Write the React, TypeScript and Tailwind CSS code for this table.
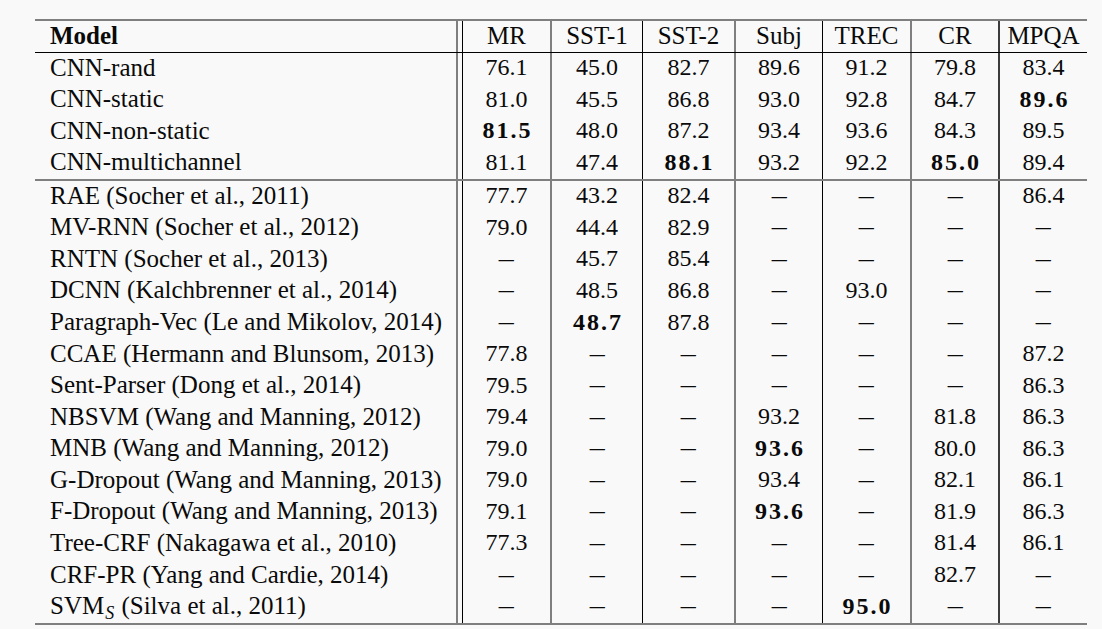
import React from "react";

type Cell = string | { b: string };
type Row = { name: React.ReactNode; v: Cell[] };

const cols = [
  "w-[88px] border-l border-black",
  "w-[92px] border-l-2 border-[#7f7f7f]",
  "w-[92px] border-l border-black",
  "w-[88px] border-l-2 border-[#7f7f7f]",
  "w-[88px] border-l border-black",
  "w-[88px] border-l-2 border-[#7f7f7f]",
  "w-[89px] border-l-2 border-[#3c3c3c]",
];

const D = "–";

const group1: Row[] = [
  { name: "CNN-rand", v: ["76.1", "45.0", "82.7", "89.6", "91.2", "79.8", "83.4"] },
  { name: "CNN-static", v: ["81.0", "45.5", "86.8", "93.0", "92.8", "84.7", { b: "89.6" }] },
  { name: "CNN-non-static", v: [{ b: "81.5" }, "48.0", "87.2", "93.4", "93.6", "84.3", "89.5"] },
  { name: "CNN-multichannel", v: ["81.1", "47.4", { b: "88.1" }, "93.2", "92.2", { b: "85.0" }, "89.4"] },
];

const group2: Row[] = [
  { name: "RAE (Socher et al., 2011)", v: ["77.7", "43.2", "82.4", D, D, D, "86.4"] },
  { name: "MV-RNN (Socher et al., 2012)", v: ["79.0", "44.4", "82.9", D, D, D, D] },
  { name: "RNTN (Socher et al., 2013)", v: [D, "45.7", "85.4", D, D, D, D] },
  { name: "DCNN (Kalchbrenner et al., 2014)", v: [D, "48.5", "86.8", D, "93.0", D, D] },
  { name: "Paragraph-Vec (Le and Mikolov, 2014)", v: [D, { b: "48.7" }, "87.8", D, D, D, D] },
  { name: "CCAE (Hermann and Blunsom, 2013)", v: ["77.8", D, D, D, D, D, "87.2"] },
  { name: "Sent-Parser (Dong et al., 2014)", v: ["79.5", D, D, D, D, D, "86.3"] },
  { name: "NBSVM (Wang and Manning, 2012)", v: ["79.4", D, D, "93.2", D, "81.8", "86.3"] },
  { name: "MNB (Wang and Manning, 2012)", v: ["79.0", D, D, { b: "93.6" }, D, "80.0", "86.3"] },
  { name: "G-Dropout (Wang and Manning, 2013)", v: ["79.0", D, D, "93.4", D, "82.1", "86.1"] },
  { name: "F-Dropout (Wang and Manning, 2013)", v: ["79.1", D, D, { b: "93.6" }, D, "81.9", "86.3"] },
  { name: "Tree-CRF (Nakagawa et al., 2010)", v: ["77.3", D, D, D, D, "81.4", "86.1"] },
  { name: "CRF-PR (Yang and Cardie, 2014)", v: [D, D, D, D, D, "82.7", D] },
  {
    name: (
      <span>
        SVM
        <span className="italic text-[18px] relative top-[5px] ml-[1px] mr-[1px]">S</span> (Silva et al., 2011)
      </span>
    ),
    v: [D, D, D, D, { b: "95.0" }, D, D],
  },
];

function ValueCell({ c, cls }: { c: Cell; cls: string }) {
  if (typeof c === "string") {
    if (c === D) {
      return (
        <div className={`${cls} flex items-center justify-center pb-[3px]`}>
          <span className="text-[25px] inline-block scale-x-[1.2]">{c}</span>
        </div>
      );
    }
    return (
      <div className={`${cls} flex items-center justify-center pb-[3px]`}>
        <span className="text-[24px]">{c}</span>
      </div>
    );
  }
  return (
    <div className={`${cls} flex items-center justify-center pb-[3px]`}>
      <span className="text-[24px] font-bold tracking-[2px] pl-[2px]">{c.b}</span>
    </div>
  );
}

function BodyRow({ r, h }: { r: Row; h: string }) {
  return (
    <div className={`flex ${h}`}>
      <div className="w-[423px] border-r-2 border-[#7f7f7f] pl-[15px] flex items-center pb-[3px] text-[25px] whitespace-nowrap">
        {r.name}
      </div>
      <div className="w-[4px]" />
      {r.v.map((c, i) => (
        <ValueCell key={i} c={c} cls={cols[i]} />
      ))}
    </div>
  );
}

export default function App() {
  const heads = ["MR", "SST-1", "SST-2", "Subj", "TREC", "CR", "MPQA"];
  return (
    <div className="w-[1102px] h-[629px] bg-[#f9f9f9] text-[#0a0a0a] [font-family:'Liberation_Serif',serif] pt-[19px] pl-[35px] overflow-hidden">
      <div className="w-[1052px] flex flex-col border-t-2 border-b-2 border-[#7f7f7f] leading-none">
        <div className="flex h-[32px] border-b border-black">
          <div className="w-[423px] border-r-2 border-[#7f7f7f] pl-[15px] flex items-center pb-[3px] text-[25px] font-bold">
            Model
          </div>
          <div className="w-[4px]" />
          {heads.map((h, i) => (
            <div key={h} className={`${cols[i]} flex items-center justify-center pb-[3px] text-[25px]`}>
              {h}
            </div>
          ))}
        </div>
        <div className="flex flex-col border-b-2 border-[#7f7f7f]">
          {group1.map((r, i) => (
            <BodyRow key={i} r={r} h="h-[31.5px]" />
          ))}
        </div>
        <div className="flex flex-col">
          {group2.map((r, i) => (
            <BodyRow key={i} r={r} h="h-[31.57px]" />
          ))}
        </div>
      </div>
    </div>
  );
}
